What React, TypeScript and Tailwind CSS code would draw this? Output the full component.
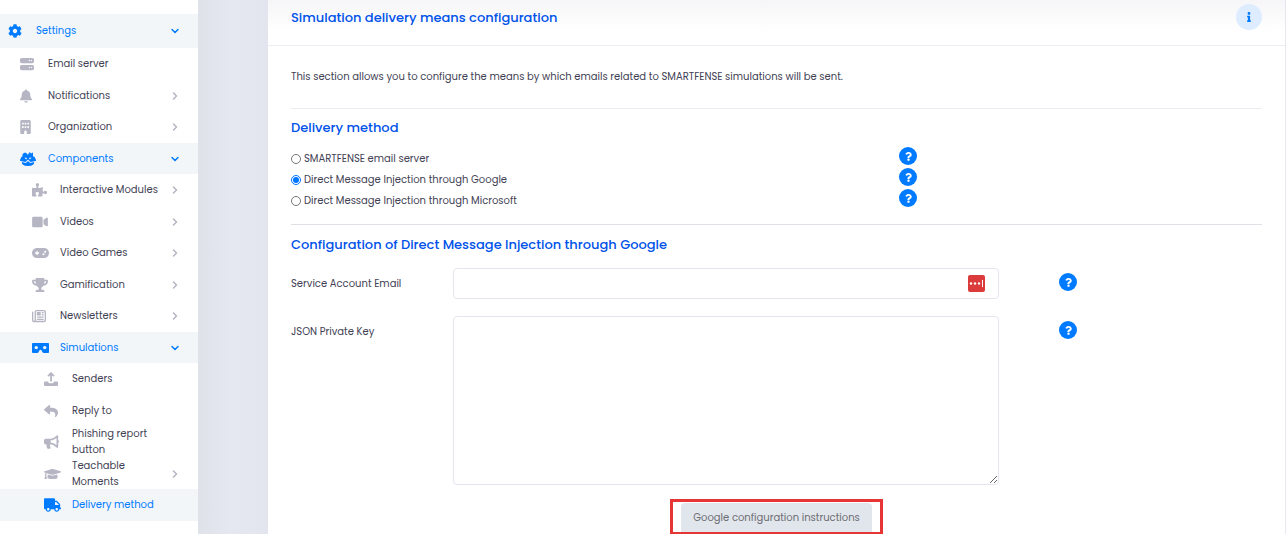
import type { ReactNode } from "react";
import { useState } from "react";
import type { IconType } from "react-icons";
import {
  FaBullhorn,
  FaCog,
  FaGraduationCap,
  FaInfo,
  FaPuzzlePiece,
  FaQuestion,
  FaReply,
  FaTrophy,
  FaTruck,
  FaVideo,
  FaVrCardboard,
} from "react-icons/fa";
import { FaBell, FaBuilding, FaGamepad, FaRegNewspaper, FaServer } from "react-icons/fa6";
import { LuChevronDown, LuChevronRight } from "react-icons/lu";

function SendersIcon({ className }: { className?: string }) {
  return (
    <svg viewBox="0 0 14 14" className={className} fill="currentColor">
      <path d="M1 9.500h3q.4 1.700 1.500 1.700h3q1.100 0 1.500-1.700h3q1 0 1 1V13q0 1-1 1H1q-1 0-1-1v-2.500q0-1 1-1z" />
      <path d="M7 9.500V1.500M4 4.200L7 1.200l3 3" fill="none" stroke="currentColor" strokeWidth="1.800" />
    </svg>
  );
}

function ComponentsIcon({ className }: { className?: string }) {
  return (
    <svg viewBox="0 0 16 14" className={className} fill="currentColor">
      <path d="M2.500 5.200V2.500q0-.8.7-1.100L5 .600l1.800.8q.7.300.7 1.100v.8L9.300.500q.5-.7 1 0l.7 1.200L12 .700q.6-.4 1 .3v4.200z" />
      <path d="M2.200 4.500h11.600q.6 0 .8.600L16 8q.2.700-.5.900l-5 1L8 7.500 5.500 9.900l-5-1q-.7-.2-.5-.900l1.400-2.900q.2-.600.8-.600z" />
      <path d="M2 10l3.800.9L8 9l2.200 1.900L14 10v1.500q0 .6-.6 1-2 1.500-5.400 1.500t-5.400-1.500q-.6-.4-.6-1z" />
      <path d="M4.500 5.600l2.700.500-1.200 1.300zM11.500 5.600l-2.700.500L10 7.400z" fill="#f2f6f9" />
    </svg>
  );
}

type Item = {
  label: string;
  icon: IconType | typeof SendersIcon;
  size: string;
  level: number;
  state?: "open" | "closed";
  active?: boolean;
};

const items: Item[] = [
  { label: "Email server", icon: FaServer, size: "w-[14px]", level: 1 },
  { label: "Notifications", icon: FaBell, size: "w-3", level: 1, state: "closed" },
  { label: "Organization", icon: FaBuilding, size: "w-[11px]", level: 1, state: "closed" },
  { label: "Components", icon: ComponentsIcon, size: "w-4", level: 1, state: "open", active: true },
  { label: "Interactive Modules", icon: FaPuzzlePiece, size: "w-[15px]", level: 2, state: "closed" },
  { label: "Videos", icon: FaVideo, size: "w-4", level: 2, state: "closed" },
  { label: "Video Games", icon: FaGamepad, size: "w-[17px]", level: 2, state: "closed" },
  { label: "Gamification", icon: FaTrophy, size: "w-4", level: 2, state: "closed" },
  { label: "Newsletters", icon: FaRegNewspaper, size: "w-[14px]", level: 2, state: "closed" },
  { label: "Simulations", icon: FaVrCardboard, size: "w-[17px]", level: 2, state: "open", active: true },
  { label: "Senders", icon: SendersIcon, size: "w-[14px]", level: 3 },
  { label: "Reply to", icon: FaReply, size: "w-[14px]", level: 3 },
  { label: "Phishing report button", icon: FaBullhorn, size: "w-[15px]", level: 3 },
  { label: "Teachable Moments", icon: FaGraduationCap, size: "w-[17px]", level: 3, state: "closed" },
  { label: "Delivery method", icon: FaTruck, size: "w-[17px]", level: 3, active: true },
];

const indent = ["pl-2", "pl-5", "pl-8", "pl-11"];

function SidebarItem({ label, icon: Icon, size, level, state, active }: Item) {
  const Chevron = state === "open" ? LuChevronDown : LuChevronRight;
  return (
    <a
      href="#"
      className={`flex items-center pr-[17px] ${indent[level]} ${
        level === 0 ? "h-[34px]" : "h-8 even:h-[31px]"
      } ${active ? "bg-[#f2f6f9] text-[#007bff]" : "text-[#3f4254]"}`}
    >
      <span className={`w-7 shrink-0 ${active ? "" : "text-[#b5b5c3]"}`}>
        <Icon className={`h-[14px] ${size}`} />
      </span>
      <span className={`flex-1 leading-4 ${level === 3 ? "pr-4" : ""}`}>{label}</span>
      {state && (
        <Chevron
          strokeWidth={3}
          className={`size-3 shrink-0 ${active ? "" : "text-[#b5b5c3]"}`}
        />
      )}
    </a>
  );
}

function Help({ label }: { label: string }) {
  return (
    <button
      type="button"
      aria-label={label}
      className="flex size-[18px] items-center justify-center rounded-full bg-[#007bff] text-white"
    >
      <FaQuestion className="size-[9px]" />
    </button>
  );
}

function SectionTitle({ children }: { children: ReactNode }) {
  return <h2 className="text-[13px] leading-5 font-medium text-[#0052e9]">{children}</h2>;
}

const methods = [
  "SMARTFENSE email server",
  "Direct Message Injection through Google",
  "Direct Message Injection through Microsoft",
];

export default function App() {
  const [method, setMethod] = useState(methods[1]);

  return (
    <div className="flex h-screen overflow-hidden bg-[#e5e8f1] font-[Poppins,'Open_Sans',sans-serif] text-[10px] text-[#3f4254]">
      <aside className="w-[198px] shrink-0 bg-white pt-[14px]">
        <SidebarItem label="Settings" icon={FaCog} size="w-[14px]" level={0} state="open" active />
        <nav>
          {items.map((item) => (
            <SidebarItem key={item.label} {...item} />
          ))}
        </nav>
      </aside>
      <div className="w-[70px] shrink-0 bg-linear-to-r from-[#e0e2e9] via-[#e5e8f1] to-[#e2e5ee]" />
      <main className="mr-px min-w-0 flex-1 bg-white">
        <header className="flex h-[46px] items-start justify-between border-b border-[#ebedf3] bg-linear-to-b from-[#f6f6f8] to-white to-70% px-[23px] pt-1">
          <h1 className="pt-1 text-[13px] leading-5 font-medium text-[#0052e9]">
            Simulation delivery means configuration
          </h1>
          <button
            type="button"
            aria-label="Information"
            className="flex size-[26px] items-center justify-center rounded-full bg-[#ddecfe] text-[#007bff]"
          >
            <FaInfo className="size-[10px]" />
          </button>
        </header>
        <div className="px-[23px]">
          <p className="pt-[22px] pb-[23px] leading-[17px]">
            This section allows you to configure the means by which emails related to
            SMARTFENSE simulations will be sent.
          </p>
          <section className="border-t border-[#ebedf3] pt-[9px] pb-[14px]">
            <SectionTitle>Delivery method</SectionTitle>
            <div className="pt-[9px]">
              {methods.map((name) => (
                <div key={name} className="flex h-[21px] items-start">
                  <label className="flex w-[608px] items-center gap-[3px] pt-1 leading-4">
                    <input
                      type="radio"
                      name="method"
                      checked={method === name}
                      onChange={() => setMethod(name)}
                      className="size-[10px] accent-[#0075ff]"
                    />
                    {name}
                  </label>
                  <Help label={`Help: ${name}`} />
                </div>
              ))}
            </div>
          </section>
          <section className="border-t border-[#dee0e6] pt-[10px]">
            <SectionTitle>Configuration of Direct Message Injection through Google</SectionTitle>
            <div className="flex items-start pt-[13px]">
              <label htmlFor="email" className="w-[162px] shrink-0 pt-2 leading-4">
                Service Account Email
              </label>
              <div className="relative w-[546px]">
                <input
                  id="email"
                  type="text"
                  className="block h-[31px] w-full rounded border border-[#e4e6ef] pr-9 pl-3"
                />
                <svg viewBox="0 0 17 17" className="absolute top-[7px] right-[14px] size-[17px]">
                  <rect width="17" height="17" rx="2" fill="#db3b3b" />
                  <g fill="#fff">
                    <circle cx="3" cy="8.500" r="1.200" />
                    <circle cx="7" cy="8.500" r="1.200" />
                    <circle cx="11" cy="8.500" r="1.200" />
                    <path d="M14 5h1v7h-1z" />
                  </g>
                </svg>
              </div>
              <div className="pt-[5px] pl-[60px]">
                <Help label="Help: Service Account Email" />
              </div>
            </div>
            <div className="flex items-start pt-[17px]">
              <label htmlFor="key" className="w-[162px] shrink-0 pt-2 leading-4">
                JSON Private Key
              </label>
              <textarea
                id="key"
                className="block h-[169px] w-[546px] rounded border border-[#e4e6ef] p-3"
              />
              <div className="pt-[5px] pl-[60px]">
                <Help label="Help: JSON Private Key" />
              </div>
            </div>
            <div className="flex justify-center pt-[14px]">
              <div className="border-3 border-[#e53535] px-2 pt-px">
                <button type="button" className="h-[29px] rounded-t bg-[#e1e5ec] px-3 text-[#6c6d72]">
                  Google configuration instructions
                </button>
              </div>
            </div>
          </section>
        </div>
      </main>
    </div>
  );
}
